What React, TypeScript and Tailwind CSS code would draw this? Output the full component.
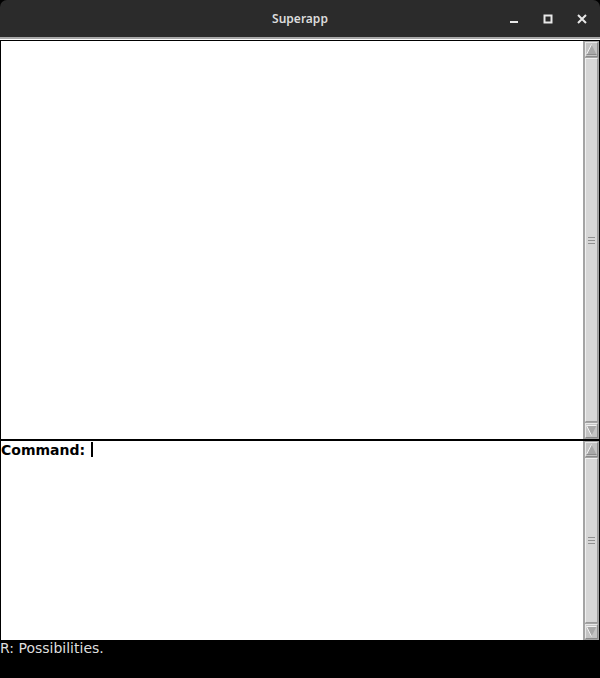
import React from 'react'

function ScrollArrow({ up }: { up: boolean }) {
  return (
    <div className="h-[15px] bg-[#c4c4c4] border-t border-l border-[#e8e8e8] border-r border-b border-r-[#8a8a8a] border-b-[#8a8a8a] flex items-center justify-center">
      <svg width="11" height="11" viewBox="0 0 11 11">
        {up ? (
          <>
            <polygon points="5.5,0.5 10.5,10.5 0.5,10.5" fill="#a8a8a8" />
            <polyline points="0.5,10.5 5.5,0.5" stroke="#f2f2f2" strokeWidth="1" fill="none" />
            <line x1="0.5" y1="10.5" x2="10.5" y2="10.5" stroke="#8a8a8a" strokeWidth="1" />
          </>
        ) : (
          <>
            <polygon points="0.5,0.5 10.5,0.5 5.5,10.5" fill="#a8a8a8" />
            <line x1="0.5" y1="0.5" x2="10.5" y2="0.5" stroke="#f2f2f2" strokeWidth="1" />
            <polyline points="0.5,0.5 5.5,10.5" stroke="#f2f2f2" strokeWidth="1" fill="none" />
          </>
        )}
      </svg>
    </div>
  )
}

function Scrollbar() {
  return (
    <div className="w-[17px] bg-[#a4a4a4] pl-[2px] pr-[1px] py-[1px] flex flex-col border-l border-white">
      <ScrollArrow up />
      <div className="flex-1 mt-[1px] mb-[1px] bg-[#d6d6d6] border-t border-l border-[#f0f0f0] border-r border-b border-r-[#9a9a9a] border-b-[#9a9a9a] flex items-center justify-center">
        <div className="flex flex-col gap-[2px]">
          <div className="w-[7px] h-px bg-[#909090]" />
          <div className="w-[7px] h-px bg-[#909090]" />
          <div className="w-[7px] h-px bg-[#909090]" />
        </div>
      </div>
      <ScrollArrow up={false} />
    </div>
  )
}

export default function App() {
  return (
    <div className="w-[600px] h-[678px] bg-black flex flex-col overflow-hidden" style={{ fontFamily: '"DejaVu Sans", sans-serif' }}>
      {/* Title bar */}
      <div className="h-[37px] bg-[#2b2b2b] rounded-t-[7px] flex items-center relative shrink-0">
        <div className="absolute inset-0 flex items-center justify-center">
          <span className="text-[#dcdcdc] text-[12px] font-semibold" style={{ fontFamily: '"Noto Sans", sans-serif' }}>Superapp</span>
        </div>
        <div className="ml-auto flex items-center gap-[24px] pr-[13px] relative">
          <svg width="10" height="10" viewBox="0 0 10 10">
            <rect x="1" y="7" width="8" height="2" fill="#e8e8e8" />
          </svg>
          <svg width="10" height="10" viewBox="0 0 10 10">
            <rect x="1.5" y="1.5" width="7" height="7" fill="none" stroke="#e8e8e8" strokeWidth="2" />
          </svg>
          <svg width="10" height="10" viewBox="0 0 10 10">
            <path d="M1 1L9 9M9 1L1 9" stroke="#e8e8e8" strokeWidth="2" />
          </svg>
        </div>
      </div>
      <div className="h-[2px] bg-[#a9a9a9] shrink-0" />
      <div className="h-px bg-white shrink-0" />

      {/* Output pane */}
      <div className="h-[401px] border border-black border-b-2 bg-white flex shrink-0">
        <div className="flex-1 bg-white" />
        <Scrollbar />
      </div>

      {/* Command pane */}
      <div className="h-[199px] border-l border-r border-black bg-white flex shrink-0">
        <div className="flex-1 bg-white pt-[1px]">
          <div className="flex items-start">
            <span className="text-[14px] font-bold text-black leading-[16px]">Command:</span>
            <span className="ml-[6px] w-[2px] h-[15px] bg-black inline-block" />
          </div>
        </div>
        <Scrollbar />
      </div>

      {/* Status line */}
      <div className="flex-1 bg-black">
        <span className="text-[14px] text-[#dedede] leading-[12px] block pt-[2px]">R: Possibilities.</span>
      </div>
    </div>
  )
}
